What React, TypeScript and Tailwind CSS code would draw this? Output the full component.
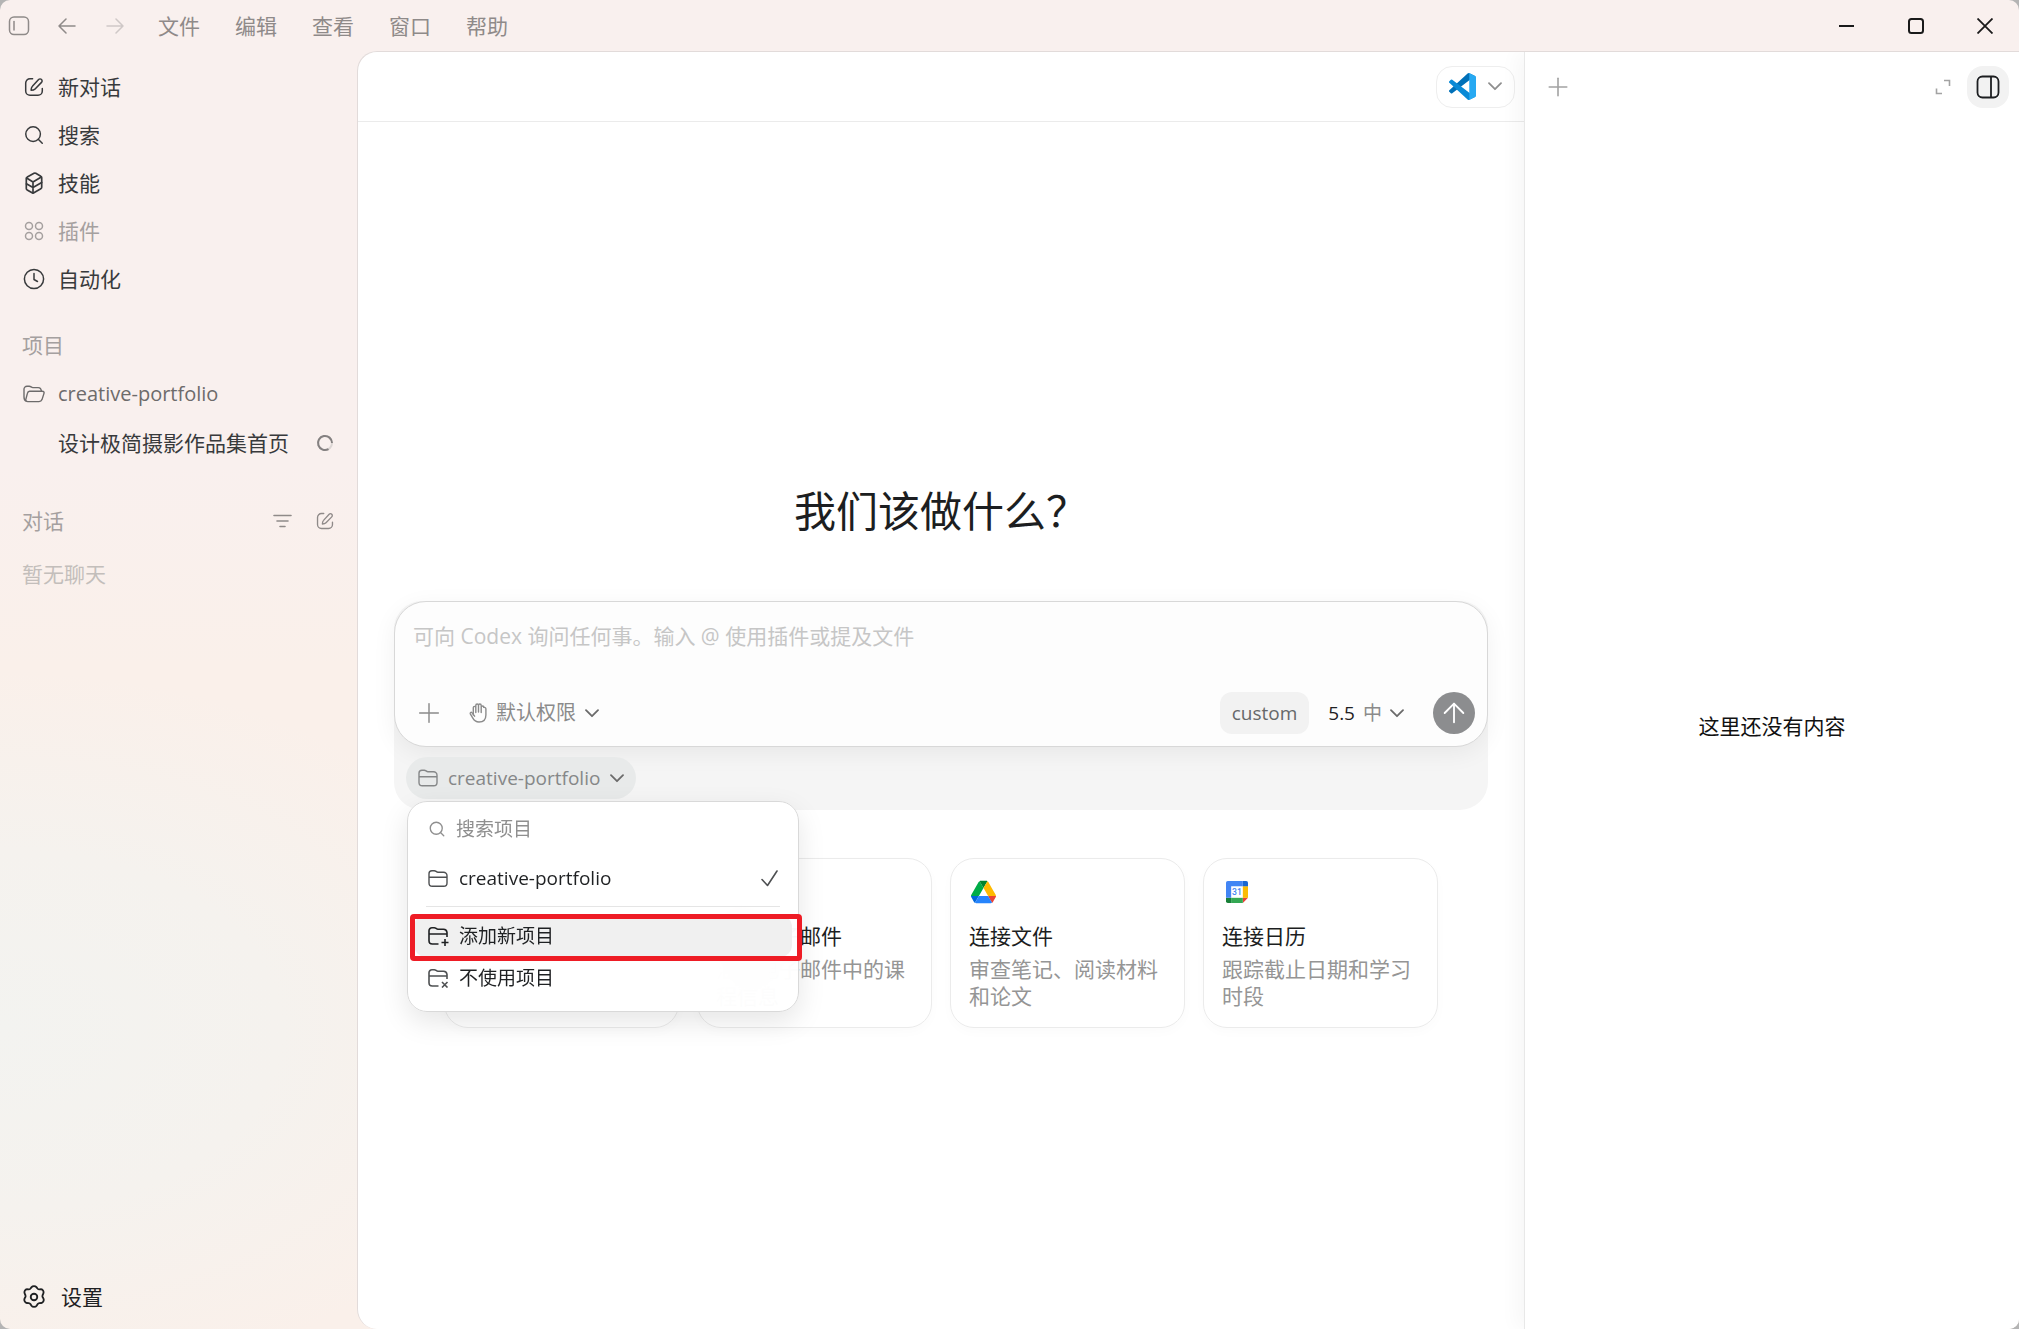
import React from 'react';
import { ArrowUp, Plus, Search } from 'lucide-react';

interface IconProps {
  className?: string;
}

const menus = ['文件', '编辑', '查看', '窗口', '帮助'];

const BackIcon = ({ className }: IconProps) => (
  <svg className={className} viewBox="0 0 18 16" fill="none" stroke="currentColor" strokeWidth="1.5" strokeLinecap="round" strokeLinejoin="round">
    <path d="M17 8H1M8 1 1 8l7 7" />
  </svg>
);

const ForwardIcon = ({ className }: IconProps) => (
  <svg className={className} viewBox="0 0 18 16" fill="none" stroke="currentColor" strokeWidth="1.5" strokeLinecap="round" strokeLinejoin="round">
    <path d="M1 8h16M10 1l7 7-7 7" />
  </svg>
);

const ChevronIcon = ({ className }: IconProps) => (
  <svg className={className} viewBox="0 0 14 9" fill="none" stroke="currentColor" strokeWidth="1.8" strokeLinecap="round" strokeLinejoin="round">
    <path d="m1 1.2 6 6 6-6" />
  </svg>
);

const CheckIcon = ({ className }: IconProps) => (
  <svg className={className} viewBox="0 0 17 17" fill="none" stroke="currentColor" strokeWidth="1.6" strokeLinecap="round" strokeLinejoin="round">
    <path d="m1 9.500 5.500 6L16 1" />
  </svg>
);

const ClockIcon = ({ className }: IconProps) => (
  <svg className={className} viewBox="0 0 22 22" fill="none" stroke="currentColor" strokeWidth="1.500" strokeLinecap="round" strokeLinejoin="round">
    <circle cx="11" cy="11" r="9.600" />
    <path d="M11 5.500v6l3.500 2" />
  </svg>
);

const ComposeIcon = ({ className }: IconProps) => (
  <svg className={className} viewBox="0 0 20 20" fill="none" stroke="currentColor" strokeWidth="1.500" strokeLinecap="round" strokeLinejoin="round">
    <path d="M8.600 1.700H6A4.300 4.300 0 0 0 1.700 6v8A4.300 4.300 0 0 0 6 18.300h8a4.300 4.300 0 0 0 4.300-4.300v-2.600" />
    <path d="M14.600 2.500a2 2 0 0 1 2.900 2.900l-6.400 6.600c-.9.900-2.400 1.300-4 1.300 0-1.600.4-3.100 1.300-4z" />
  </svg>
);

const CubeIcon = ({ className }: IconProps) => (
  <svg className={className} viewBox="0 0 18 22" fill="none" stroke="currentColor" strokeWidth="1.700" strokeLinecap="round" strokeLinejoin="round">
    <path d="M2.300 5.100 9 1.300c.6-.3 1.200-.3 1.800 0l5 2.900c.6.300.9.900.9 1.500v9.600c0 .6-.3 1.200-.9 1.500l-6.900 4c-.6.300-1.200.3-1.800 0l-4.900-2.900c-.6-.3-.9-.9-.9-1.500V6.600c0-.6.400-1.200 1-1.500z" />
    <path d="m1.600 6 6.400 4 8.300-5M8 10v11M1.400 11.800 8 15.600l8.700-5.200" />
  </svg>
);

const AppsIcon = ({ className }: IconProps) => (
  <svg className={className} viewBox="0 0 20 20" fill="none" stroke="currentColor" strokeWidth="1.500">
    <circle cx="5" cy="5" r="3.500" />
    <circle cx="15" cy="5" r="3.500" />
    <circle cx="5" cy="15" r="3.500" />
    <circle cx="15" cy="15" r="3.500" />
  </svg>
);

const FolderIcon = ({ className }: IconProps) => (
  <svg className={className} viewBox="0 0 20 18" fill="none" stroke="currentColor" strokeWidth="1.400" strokeLinejoin="round">
    <path d="M1 4.200A3 3 0 0 1 4 1.200h2.300c1.600 0 2 1.500 3.700 1.500h5.500A3.500 3.500 0 0 1 19 6.200v7.300a3.300 3.300 0 0 1-3.300 3.300H4.300A3.300 3.300 0 0 1 1 13.500zM1 7.800h18" />
  </svg>
);

const FolderOpenIcon = ({ className }: IconProps) => (
  <svg className={className} viewBox="0 0 22 18" fill="none" stroke="currentColor" strokeWidth="1.400" strokeLinejoin="round">
    <path d="M3.300 16.200C1.400 15.600 1 14 1 12V4.300A3 3 0 0 1 4 1.200h2.300c1.600 0 2 1.400 3.600 1.400h5.300c2 0 3 1.300 3.200 3.700" />
    <path d="M6.500 6.300h12.700c1.600 0 2.200 1 1.700 2.300l-1.900 6c-.5 1.400-1.500 2-3 2H4.800c-1.700 0-2.400-1-1.900-2.500l1.500-5.700c.3-1.400 1-2.100 2.100-2.100z" />
  </svg>
);

const FolderActionIcon = ({ className, remove }: IconProps & { remove?: boolean }) => (
  <svg className={className} viewBox="0 0 21 20" fill="none" stroke="currentColor" strokeWidth="1.600" strokeLinejoin="round">
    <path d="M10.500 18H4.300A3.300 3.300 0 0 1 1 14.700V4.700a3 3 0 0 1 3-3h2.300c1.600 0 2 1.500 3.700 1.500h5.500c2 0 3.300 1.300 3.500 3.300V11M1 8h18" />
    {remove ? <path d="m14 14 5.500 5.500m0-5.500L14 19.500" /> : <path d="M17 13v7M13.500 16.500h7" />}
  </svg>
);

const HandIcon = ({ className }: IconProps) => (
  <svg className={className} viewBox="0 0 18 20" fill="none" stroke="currentColor" strokeWidth="1.400" strokeLinecap="round" strokeLinejoin="round">
    <path d="M4.300 12V4.600a1.250 1.250 0 0 1 2.500 0V9.500M6.800 9V2.400a1.300 1.300 0 0 1 2.700 0V9M9.500 9V2.400a1.300 1.300 0 0 1 2.700 0V9.500M12.200 9.500V4.400a1.300 1.300 0 0 1 2.700 0" />
    <path d="M14.900 4.400c1.200-.3 2 .5 2 1.600V12c0 4.300-2.700 7-6.900 7-3.400 0-5-1.600-6.300-4.100L1.300 10.800c-.5-1.100.8-2 1.700-1.100l2.600 3.500" />
  </svg>
);

const GearIcon = ({ className }: IconProps) => (
  <svg className={className} viewBox="0 0 22 22" fill="none" stroke="currentColor" strokeWidth="1.700" strokeLinejoin="round">
    <path d="M8.800 1.900c1-1.200 3.400-1.200 4.400 0l1 1.300c.5.600 1 .8 1.700.8l1.600-.1c1.500 0 2.800 2.200 2.100 3.700l-.7 1.600c-.3.700-.3 1.200 0 1.800l.8 1.500c.8 1.500-.4 3.900-2 4l-1.800.1c-.7.100-1.100.300-1.500.9l-1 1.500c-1 1.400-3.700 1.400-4.700 0l-1-1.500c-.4-.6-.9-.8-1.600-.9l-1.700-.1c-1.600-.1-2.800-2.400-2.100-4l.8-1.500c.3-.6.3-1.100 0-1.800l-.700-1.600C1.700 6.100 3 3.900 4.500 3.900l1.600.1c.7 0 1.200-.2 1.700-.8z" />
    <circle cx="11" cy="11" r="3" />
  </svg>
);

const VsCodeIcon = ({ className }: IconProps) => (
  <svg className={className} viewBox="0 0 100 100">
    <path fill="#0070b8" d="M96.500 10.800 75.900.9a6.200 6.200 0 0 0-7.100 1.200L1.300 63.600a4.200 4.200 0 0 0 0 6.200l5.500 5a4.200 4.200 0 0 0 5.300.2l81.300-61.600c2.700-2.100 6.600-.1 6.600 3.300v-.2a6.200 6.200 0 0 0-3.500-5.700z" />
    <path fill="#0a8ad6" d="m96.500 89.200-20.600 9.900a6.200 6.200 0 0 1-7.100-1.200L1.300 36.400a4.200 4.200 0 0 1 0-6.200l5.500-5a4.200 4.200 0 0 1 5.300-.2l81.300 61.600c2.700 2.100 6.600.1 6.600-3.300v.2a6.200 6.200 0 0 1-3.500 5.700z" />
    <path fill="#27a9f2" d="M75.900 99.100a6.200 6.200 0 0 1-7.100-1.200c2.300 2.300 6.200.7 6.200-2.600V4.700c0-3.300-3.900-4.900-6.200-2.600a6.200 6.200 0 0 1 7.100-1.200l20.600 9.900A6.200 6.200 0 0 1 100 16.500v67a6.200 6.200 0 0 1-3.500 5.700z" />
  </svg>
);

const DriveIcon = ({ className }: IconProps) => (
  <svg className={className} viewBox="0 0 87.300 78">
    <path fill="#0066da" d="m6.600 66.850 3.850 6.650c.8 1.400 1.950 2.500 3.300 3.300L27.500 53H0c0 1.550.4 3.100 1.200 4.500z" />
    <path fill="#00ac47" d="M43.650 25 29.900 1.200c-1.350.8-2.500 1.900-3.300 3.300L1.200 48.500A9.060 9.060 0 0 0 0 53h27.500z" />
    <path fill="#ea4335" d="M73.550 76.800c1.350-.8 2.500-1.900 3.300-3.300l1.600-2.750L86.100 57.500c.8-1.400 1.200-2.950 1.200-4.500H59.798l5.852 11.500z" />
    <path fill="#00832d" d="M43.650 25 57.400 1.200C56.050.4 54.500 0 52.900 0H34.400c-1.600 0-3.150.45-4.500 1.200z" />
    <path fill="#2684fc" d="M59.800 53H27.500L13.750 76.800c1.350.8 2.900 1.200 4.500 1.200h50.800c1.600 0 3.150-.45 4.500-1.200z" />
    <path fill="#ffba00" d="M73.400 26.500 60.700 4.500c-.8-1.400-1.950-2.500-3.300-3.300L43.650 25 59.800 53h27.450c0-1.550-.4-3.100-1.200-4.500z" />
  </svg>
);

const CalendarIcon = ({ className }: IconProps) => (
  <svg className={className} viewBox="0 0 200 200">
    <path fill="#fff" d="M47 47h106v106H47z" />
    <path fill="#ea4335" d="M153 200l47-47h-47z" />
    <path fill="#fbbc04" d="M153 47h47v106h-47z" />
    <path fill="#34a853" d="M47 153h106v47H47z" />
    <path fill="#188038" d="M0 153v31a16 16 0 0 0 16 16h31v-47z" />
    <path fill="#1967d2" d="M200 47V16a16 16 0 0 0-16-16h-31v47z" />
    <path fill="#4285f4" d="M153 0H16A16 16 0 0 0 0 16v137h47V47h106z" />
    <text x="100" y="128" textAnchor="middle" fontSize="78" fontFamily="Roboto, sans-serif" fontWeight="500" fill="#4285f4">31</text>
  </svg>
);

const MailIcon = ({ className }: IconProps) => (
  <svg className={className} viewBox="0 0 24 20" fill="none" strokeWidth="4">
    <path stroke="#4285f4" d="M3 19V4" />
    <path stroke="#34a853" d="M21 19V4" />
    <path stroke="#ea4335" d="m3 4 9 7 9-7" />
  </svg>
);

const navItems = [
  { label: '新对话', icon: <ComposeIcon className="size-5" /> },
  { label: '搜索', icon: <Search className="size-[22px]" strokeWidth={1.6} /> },
  { label: '技能', icon: <CubeIcon className="h-[22px] w-[18px]" /> },
  { label: '插件', icon: <AppsIcon className="size-5" />, muted: true },
  { label: '自动化', icon: <ClockIcon className="size-[22px]" /> },
];

const cards = [
  { id: 'build', title: '', text: '', icon: <FolderIcon className="size-6" /> },
  { id: 'mail', title: '整理电子邮件', text: '汇总电子邮件中的课程信息', icon: <MailIcon className="size-6" /> },
  { id: 'files', title: '连接文件', text: '审查笔记、阅读材料和论文', icon: <DriveIcon className="h-6 w-[25px]" /> },
  { id: 'calendar', title: '连接日历', text: '跟踪截止日期和学习时段', icon: <CalendarIcon className="size-[22px]" /> },
];

const TitleBar = () => (
  <header className="flex h-[51px] shrink-0 items-center text-[#8f8a89]">
    <div className="flex items-center gap-6 pl-[7px]">
      <button aria-label="切换边栏" className="flex w-6 justify-center">
        <svg className="size-[22px]" viewBox="0 0 22 22" fill="none" stroke="currentColor" strokeWidth="1.500">
          <rect x="1.500" y="2" width="19" height="17.500" rx="4.500" />
          <path d="M6 6.500v8.500" strokeLinecap="round" />
        </svg>
      </button>
      <button aria-label="后退" className="flex w-6 justify-center"><BackIcon className="h-4 w-[18px]" /></button>
      <button aria-label="前进" className="flex w-6 justify-center text-[#cfc8c7]"><ForwardIcon className="h-4 w-[18px]" /></button>
    </div>
    <nav className="ml-[31px] flex gap-[35px]">
      {menus.map((item) => (
        <button key={item}>{item}</button>
      ))}
    </nav>
    <div className="ml-auto flex h-full text-[#1a1a1a]">
      <button aria-label="最小化" className="flex w-[69px] items-center justify-center">
        <svg className="size-4" viewBox="0 0 16 16" stroke="currentColor" strokeWidth="2"><path d="M0 8h15" /></svg>
      </button>
      <button aria-label="最大化" className="flex w-[69px] items-center justify-center">
        <svg className="size-4" viewBox="0 0 16 16" fill="none" stroke="currentColor" strokeWidth="2"><rect x="1" y="1" width="14" height="14" rx="2.500" /></svg>
      </button>
      <button aria-label="关闭" className="flex w-[69px] items-center justify-center">
        <svg className="size-4" viewBox="0 0 16 16" stroke="currentColor" strokeWidth="1.800"><path d="m.5.500 15 15m0-15-15 15" /></svg>
      </button>
    </div>
  </header>
);

const Sidebar = () => (
  <aside className="flex w-[357px] shrink-0 flex-col px-[22px] pt-3 text-[#383a3c]">
    <nav className="flex flex-col">
      {navItems.map((item) => (
        <button key={item.label} className={item.muted ? 'flex h-12 items-center gap-3 text-[#a5a09f]' : 'flex h-12 items-center gap-3'}>
          <span className="flex w-6 justify-center">{item.icon}</span>
          {item.label}
        </button>
      ))}
    </nav>

    {/* Projects */}
    <h2 className="mt-[18px] flex h-12 items-center text-[#a5a09f]">项目</h2>
    <button className="mt-px flex h-12 items-center gap-3 text-[20px] text-[#6d6b6b]">
      <span className="flex w-6 justify-center"><FolderOpenIcon className="h-[18px] w-[22px]" /></span>
      creative-portfolio
    </button>
    <button className="mt-px flex h-12 items-center justify-between pl-9">
      设计极简摄影作品集首页
      <svg className="size-5" viewBox="0 0 20 20" fill="none" strokeWidth="2">
        <circle cx="10" cy="10" r="7" stroke="#dcd6d4" />
        <path d="M13.500 16.060A7 7 0 1 1 17 10" stroke="#858181" />
      </svg>
    </button>

    {/* Chats */}
    <div className="mt-[30px] flex h-12 items-center text-[#8f8a89]">
      <h2 className="text-[#a5a09f]">对话</h2>
      <button aria-label="筛选" className="ml-auto mr-[23px]">
        <svg className="h-3.5 w-[19px]" viewBox="0 0 19 14" stroke="currentColor" strokeWidth="1.600" strokeLinecap="round"><path d="M1 1.500h17M4 7h11M7 12.500h5" /></svg>
      </button>
      <button aria-label="新对话" className="flex w-5 justify-center"><ComposeIcon className="size-[18px]" /></button>
    </div>
    <p className="mt-[5px] flex h-12 items-center text-[#c3bebb]">暂无聊天</p>

    <button className="mb-2 mt-auto flex h-12 items-center gap-[15px] text-[#1f2123]">
      <span className="flex w-6 justify-center"><GearIcon className="size-6" /></span>
      设置
    </button>
  </aside>
);

const ProjectMenu = () => (
  <div className="absolute left-[13px] top-[200px] z-10 w-[392px] rounded-[20px] border border-[#d9d9d9] bg-white/95 pb-3 pt-[7px] text-[19px] text-[#1f2123] shadow-[0_10px_28px_rgba(0,0,0,0.1)] backdrop-blur-xl">
    <label className="flex h-10 items-center gap-2.5 px-5">
      <Search className="size-[18px] text-[#8f8f8f]" strokeWidth={1.8} />
      <input aria-label="搜索项目" placeholder="搜索项目" className="min-w-0 flex-1 outline-none placeholder:text-[#8f8f8f]" />
    </label>
    <button className="mt-[9px] flex h-10 w-full items-center gap-[11px] px-5">
      <FolderIcon className="h-[19px] w-5 text-[#4e5052]" />
      creative-portfolio
      <CheckIcon className="ml-auto size-[17px] text-[#4e5052]" />
    </button>
    <hr className="mx-[18px] my-2 border-[#e5e5e5]" />
    <div className="px-1.5">
      <button className="flex h-[42px] w-full items-center gap-2.5 rounded-xl bg-[#f0f0f0] px-3.5">
        <FolderActionIcon className="h-5 w-[21px]" />
        添加新项目
      </button>
      <button className="flex h-[42px] w-full items-center gap-2.5 px-3.5">
        <FolderActionIcon className="h-5 w-[21px] text-[#4e5052]" remove />
        不使用项目
      </button>
    </div>
    {/* Callout frame over the add entry */}
    <div className="pointer-events-none absolute -right-1 left-0.5 top-[112px] h-[47px] rounded-sm border-5 border-[#ee1c25]" />
  </div>
);

const Composer = () => (
  <section className="relative mt-[60px] rounded-[28px] bg-[#f5f5f5]">
    <div className="rounded-[32px] border border-[#d8d8d8] bg-[#fdfdfd] pb-3 pl-[18px] pr-3 pt-4 shadow-[0_6px_24px_rgba(0,0,0,0.06)]">
      <textarea
        aria-label="任务描述"
        rows={1}
        placeholder="可向 Codex 询问任何事。输入 @ 使用插件或提及文件"
        className="block h-[74px] w-full resize-none leading-9 outline-none placeholder:text-[#c6c6c6]"
      />
      <div className="flex h-[42px] items-center text-[#8b8b8b]">
        <button aria-label="添加"><Plus className="size-8" strokeWidth={1.1} /></button>
        <button className="ml-6 flex items-center gap-[9px] text-[20px]">
          <HandIcon className="h-5 w-[18px]" />
          默认权限
          <ChevronIcon className="h-[9px] w-3.5 text-[#6b6b6b]" />
        </button>
        <button className="ml-auto h-[42px] rounded-xl bg-[#f2f2f2] px-3 text-[19px] text-[#66686a]">custom</button>
        <button className="ml-[19px] flex items-center gap-2 text-[19px]">
          <span className="text-[#1f2123]">5.5</span>
          中
          <ChevronIcon className="h-[9px] w-3.5 text-[#6b6b6b]" />
        </button>
        <button aria-label="发送" className="ml-[29px] flex size-[42px] items-center justify-center rounded-full bg-[#8c8d8f] text-white">
          <ArrowUp className="size-8" strokeWidth={1.4} />
        </button>
      </div>
    </div>
    <div className="flex h-[63px] px-3 pt-2.5">
      <button className="flex h-[42px] items-center gap-2.5 rounded-full bg-[#e8eaea] px-3 text-[19px] text-[#858788]">
        <FolderIcon className="h-[18px] w-5" />
        creative-portfolio
        <ChevronIcon className="h-[9px] w-3.5 text-[#6b6b6b]" />
      </button>
    </div>
    <ProjectMenu />
  </section>
);

const App: React.FC = () => {
  return (
    <div className="bg-[#b4b4b4]">
      <div className="flex min-h-screen flex-col overflow-hidden rounded-[10px] bg-[#f9f0ee] bg-[radial-gradient(560px_360px_at_0_1030px,#f3f3f0_0%,#f5f2ee_50%,transparent_100%),linear-gradient(#f9f0ee_35%,#faf0ea_50%)] font-['Open_Sans','Noto_Sans_CJK_SC',sans-serif] text-[21px] leading-7">
        <TitleBar />
        <div className="flex flex-1">
          <Sidebar />
          <div className="flex min-w-0 flex-1 overflow-hidden rounded-l-[20px] border-l border-t border-[#e2dbda] bg-white">
            {/* Conversation */}
            <main className="flex min-w-0 flex-1 flex-col">
              <div className="flex h-[70px] shrink-0 items-center justify-end border-b border-[#ebebeb] pr-[9px]">
                <button aria-label="打开方式" className="flex h-[42px] items-center gap-3 rounded-2xl border border-[#eeeeee] px-3">
                  <VsCodeIcon className="size-[27px]" />
                  <ChevronIcon className="h-[9px] w-3.5 text-[#8f8f8f]" />
                </button>
              </div>
              <div className="px-9 pt-[359px]">
                <h1 className="text-center text-[42px] leading-[60px] text-[#1c1e21]">我们该做什么？</h1>
                <Composer />
                <div className="mx-[50px] mt-12 grid grid-cols-4 gap-[18px]">
                  {cards.map((card) => (
                    <button key={card.id} className="flex h-[170px] flex-col items-start rounded-3xl border border-[#ebebeb] px-[18px] pt-[21px] text-left shadow-[0_4px_12px_rgba(0,0,0,0.02)]">
                      <span className="flex h-6 w-[29px] items-center justify-center">{card.icon}</span>
                      <span className="mt-[18px] whitespace-nowrap text-[#1c1e21]">{card.title}</span>
                      <span className="mt-1.5 leading-[27px] text-[#959595]">{card.text}</span>
                    </button>
                  ))}
                </div>
              </div>
            </main>

            {/* Side panel */}
            <aside className="flex w-[495px] shrink-0 flex-col border-l border-[#e8e8e8] text-[#a3a3a3] shadow-[-6px_0_20px_rgba(0,0,0,0.04)]">
              <div className="flex h-[69px] shrink-0 items-center pl-[18px] pr-2.5">
                <button aria-label="新标签页"><Plus className="size-[30px]" strokeWidth={1.3} /></button>
                <button aria-label="展开" className="ml-auto mr-4">
                  <svg className="size-4" viewBox="0 0 16 16" fill="none" stroke="currentColor" strokeWidth="1.600"><path d="M9 1.500h5.500v5.500M1.500 9.500v5H7" /></svg>
                </button>
                <button aria-label="切换侧面板" className="flex size-[42px] items-center justify-center rounded-2xl bg-[#f2f2f2] text-[#1c1e21]">
                  <svg className="size-6" viewBox="0 0 24 24" fill="none" stroke="currentColor" strokeWidth="1.800">
                    <rect x="1.500" y="1.500" width="21" height="21" rx="5" />
                    <path d="M15 1.500v21" />
                  </svg>
                </button>
              </div>
              <div className="flex flex-1 items-center justify-center pt-0.5 text-[#111111]">这里还没有内容</div>
            </aside>
          </div>
        </div>
      </div>
    </div>
  );
};

export default App;
